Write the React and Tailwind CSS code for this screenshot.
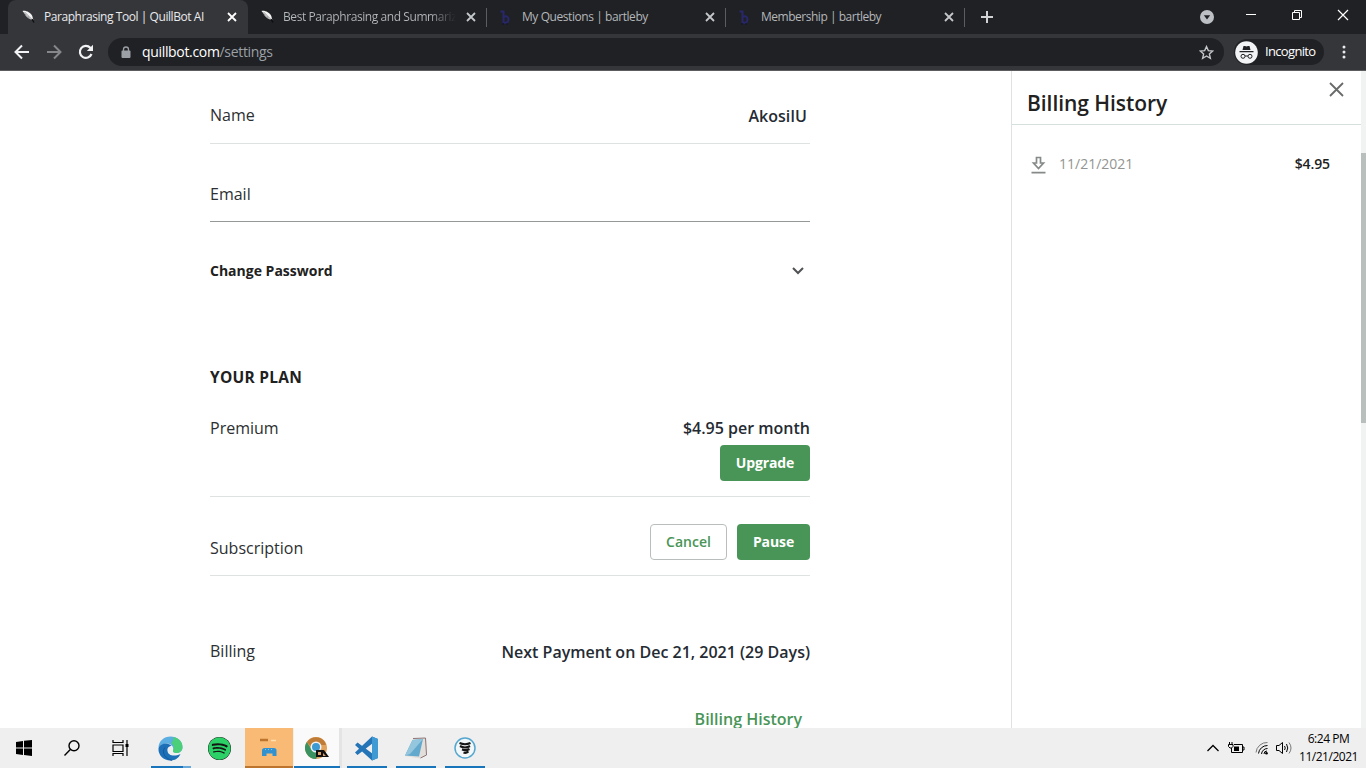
import { FaSpotify } from 'react-icons/fa';

const tabs = [
    { title: 'Paraphrasing Tool | QuillBot AI', icon: 'quill', active: true, text: 'tracking-[-0.44px]' },
    { title: 'Best Paraphrasing and Summariz', icon: 'quill', text: 'tracking-[-0.42px] bg-linear-to-r from-[#b4b7bb] from-85% to-[#202124] bg-clip-text text-transparent' },
    { title: 'My Questions | bartleby', icon: 'bartleby', text: 'tracking-[-0.43px]' },
    { title: 'Membership | bartleby', icon: 'bartleby', text: 'tracking-[-0.48px]' },
];

function QuillIcon() {
    return (
        <svg width="16" height="16" viewBox="0 0 16 16" className="shrink-0">
            <path d="M1.500 2C5 1.200 9.500 3.500 11.300 7L12.300 11 9.500 10.200C6.500 9 4.500 7 3.500 4.500Z" fill="#f4f4f4" />
            <path d="M3.500 3L11 10.500M5.500 7L4 5M8.500 9.500L6.500 7" stroke="#77797c" strokeWidth=".8" />
            <path d="M11 10.200L13 13.500" stroke="#0c0d0e" strokeWidth="1.300" />
        </svg>
    );
}

function BartlebyIcon() {
    return (
        <svg width="16" height="16" viewBox="0 0 16 16" fill="none" className="shrink-0">
            <path d="M1.500 2.500H4.500V14M4.500 8C6.500 6.500 9.500 7 9.500 10.500S6.500 14.500 4.500 13" stroke="#28276c" strokeWidth="2" />
            <path d="M3 15H9" stroke="#111238" strokeDasharray="2 2" />
        </svg>
    );
}

function Cross({ size = 8, stroke = 1.8 }) {
    return (
        <svg width={size} height={size} viewBox="0 0 10 10" stroke="currentColor" strokeWidth={(stroke * 10) / size} className="shrink-0 overflow-visible">
            <path d="M0 0L10 10M10 0L0 10" />
        </svg>
    );
}

function Tab({ tab }) {
    return (
        <div className={`relative flex h-[34px] shrink-0 items-center ${tab.active ? 'w-[240px] rounded-t-lg bg-[#35363a] pl-[13px] text-[#e8eaed]' : 'w-[239px] pl-[12px] text-[#b4b7bb]'}`}>
            {tab.icon === 'quill' ? <QuillIcon /> : <BartlebyIcon />}
            <span className={`ml-[7px] whitespace-nowrap text-[12px] ${tab.text}`}>{tab.title}</span>
            <div className={`ml-auto mr-[12px] ${tab.active ? 'text-white' : 'text-[#c4c7ca]'}`}>
                <Cross />
            </div>
            {!tab.active && <div className="absolute right-0 top-2 h-[19px] w-px bg-[#5b5d60]" />}
        </div>
    );
}

function TabStrip() {
    return (
        <div className="flex h-[34px] items-center bg-[#202124]">
            <div className="ml-2 flex">
                {tabs.map(tab => <Tab key={tab.title} tab={tab} />)}
            </div>
            <svg width="12" height="12" viewBox="0 0 12 12" stroke="#d0d2d4" strokeWidth="2" className="ml-[16px]">
                <path d="M6 0V12M0 6H12" />
            </svg>
            <div className="ml-auto flex items-center">
                <svg width="14" height="14" viewBox="0 0 14 14">
                    <circle cx="7" cy="7" r="7" fill="#bdc1c6" />
                    <path d="M3.800 5.300H10.200L7 9.500Z" fill="#202124" />
                </svg>
                <div className="ml-[32px] mb-[5px] h-px w-[10px] bg-white" />
                <svg width="10" height="10" viewBox="0 0 10 10" fill="none" stroke="white" className="ml-[36px] mb-[5px]">
                    <path d="M.5 2.500H7.500V9.500H.5ZM2.500 2V.5H9.500V7.500H8" />
                </svg>
                <div className="ml-[36px] mr-[18px] mb-[5px] text-white">
                    <Cross size={10} stroke={1.2} />
                </div>
            </div>
        </div>
    );
}

function Toolbar() {
    return (
        <div className="flex h-[37px] items-center border-b border-[#5c5b5f] bg-[#35363a]">
            <svg width="16" height="16" viewBox="0 0 16 16" fill="none" stroke="#f1f3f4" strokeWidth="2" className="ml-[14px]">
                <path d="M15 8H2M8 1.500L1.500 8 8 14.500" />
            </svg>
            <svg width="16" height="16" viewBox="0 0 16 16" fill="none" stroke="#85878a" strokeWidth="2" className="ml-4">
                <path d="M1 8H14M8 1.500L14.500 8 8 14.500" />
            </svg>
            <svg width="16" height="16" viewBox="0 0 16 16" fill="none" stroke="#f1f3f4" strokeWidth="2.200" className="ml-4">
                <path d="M13.500 10A6 6 0 1 1 12.300 3.800L14 5.500" />
                <path d="M15 .8V7H8.800Z" fill="#f1f3f4" stroke="none" />
            </svg>
            <div className="ml-[14px] flex h-7 w-[1116px] items-center rounded-full bg-[#202124] pl-[13px] pr-[10px]">
                <svg width="10" height="13" viewBox="0 0 10 13" fill="none">
                    <path d="M2.500 5V3.500A2.500 2.500 0 0 1 7.500 3.500V5" stroke="#9aa0a6" strokeWidth="1.300" />
                    <rect x=".5" y="4.500" width="9" height="7.500" rx="1" fill="#9aa0a6" />
                </svg>
                <span className="mb-px ml-[11px] text-[14px] tracking-[-0.33px] text-white">
                    quillbot.com<span className="text-[#9aa0a6]">/settings</span>
                </span>
                <svg width="15" height="15" viewBox="0 0 24 24" fill="none" stroke="#c5c8cb" strokeWidth="2.200" className="ml-auto">
                    <path d="M12 2.500L14.900 9 22 9.600 16.600 14.300 18.200 21.300 12 17.600 5.800 21.300 7.400 14.300 2 9.600 9.100 9Z" />
                </svg>
            </div>
            <div className="ml-[10px] flex h-[26px] w-[90px] items-center rounded-full bg-[#202124]">
                <svg width="23" height="23" viewBox="0 0 23 23" fill="none" className="ml-px shrink-0">
                    <circle cx="11.500" cy="11.500" r="11.300" fill="#f1f3f4" />
                    <path d="M7.500 9L8.500 5H10L11.500 5.500 13 5H14.500L15.500 9Z" fill="#202124" />
                    <path d="M4.500 10.700H18.500M10 15H13" stroke="#202124" strokeWidth="1.200" />
                    <circle cx="8" cy="15.300" r="2" stroke="#202124" />
                    <circle cx="15" cy="15.300" r="2" stroke="#202124" />
                </svg>
                <span className="ml-[7px] text-[13px] tracking-[-0.66px] text-white">Incognito</span>
            </div>
            <svg width="4" height="14" viewBox="0 0 4 14" fill="#e8eaed" className="ml-[18px]">
                <circle cx="2" cy="2" r="1.500" />
                <circle cx="2" cy="7" r="1.500" />
                <circle cx="2" cy="12" r="1.500" />
            </svg>
        </div>
    );
}

function Settings() {
    return (
        <main className="ml-[210px] w-[600px] text-[16px] leading-6 text-[#2d2f31]">
            <div className="flex h-[73px] items-center justify-between border-b border-[#dee3e2] pt-4">
                <span>Name</span>
                <span className="pr-[3px] pt-0.5 font-semibold text-[#252b33]">AkosiIU</span>
            </div>
            <div className="flex h-[78px] items-center border-b border-[#949996] pt-[23px]">Email</div>
            <div className="flex h-[98px] items-center justify-between pr-[6px]">
                <span className="text-[14px] font-bold text-[#212121]">Change Password</span>
                <svg width="12" height="8" viewBox="0 0 12 8" fill="none" stroke="#505254" strokeWidth="2">
                    <path d="M1 1L6 6 11 1" />
                </svg>
            </div>
            <h2 className="flex h-[84px] items-center pt-[30px] text-[15.5px] font-bold tracking-[0.25px] text-[#212121]">YOUR PLAN</h2>
            <div className="flex h-[93px] items-start justify-between border-b border-[#dee3e2] pt-3">
                <span>Premium</span>
                <div className="flex flex-col items-end gap-[5px]">
                    <span className="font-semibold text-[#252b33]">$4.95 per month</span>
                    <button className="h-9 w-[90px] rounded-[4px] bg-[#499557] text-[14px] font-bold tracking-[-0.1px] text-white">Upgrade</button>
                </div>
            </div>
            <div className="flex h-[79px] items-start justify-between border-b border-[#dee3e2] pt-[27px]">
                <span className="pt-3">Subscription</span>
                <div className="flex gap-[10px]">
                    <button className="h-9 w-[77px] rounded-[4px] border border-[#b9bebb] text-[14px] font-semibold text-[#499557]">Cancel</button>
                    <button className="h-9 w-[73px] rounded-[4px] bg-[#499557] text-[14px] font-bold tracking-[-0.1px] text-white">Pause</button>
                </div>
            </div>
            <div className="flex h-[118px] items-center justify-between pt-8">
                <span>Billing</span>
                <span className="pt-0.5 font-semibold text-[#252b33]">Next Payment on Dec 21, 2021 (29 Days)</span>
            </div>
            <div className="flex h-[50px] items-center justify-end pr-2 font-semibold text-[#499557]">Billing History</div>
        </main>
    );
}

function BillingPanel() {
    return (
        <aside className="ml-auto w-[350px] border-l border-[#dde3e2]">
            <div className="flex h-[54px] justify-between border-b border-[#d5dfdd] pl-[15px] pr-[18px]">
                <h2 className="pt-[18px] text-[21px] font-semibold leading-7 tracking-[-0.05px] text-[#212121]">Billing History</h2>
                <div className="pt-[12px] text-[#686b6a]">
                    <Cross size={13} stroke={1.8} />
                </div>
            </div>
            <div className="flex h-[78px] items-center pl-[19px] pr-[31px] text-[14px]">
                <svg width="15" height="18" viewBox="0 0 15 18" fill="none" stroke="#858988" strokeWidth="1.700" className="mt-0.5">
                    <path d="M5.500 1.500H9.500V7H12.500L7.500 12.500 2.500 7H5.500ZM.5 16.700H14.500" />
                </svg>
                <span className="mb-0.5 ml-[13px] text-[#929591]">11/21/2021</span>
                <span className="mb-0.5 ml-auto font-semibold tracking-[-0.1px] text-[#212121]">$4.95</span>
            </div>
        </aside>
    );
}

function EdgeIcon() {
    return (
        <svg width="25" height="25" viewBox="0 0 25 25" className="mr-px">
            <path d="M.5 12C.5 5 6 .5 12.500 .5C19 .5 24.500 5 24.500 11C24.500 15 21.500 17 18.500 17C16 17 14.500 16 15 14.500C16.500 11 13 7.500 8.500 7.500C4 7.500 1 10 .5 12Z" fill="#5baee2" />
            <path d="M15 1C21 2 24.500 6 24.500 11C24.500 15 21.500 17 18.500 17C16 17 14.500 16 15 14.500C17 11 15 8 13 7C15 6 16 3 15 1Z" fill="#4bcf78" />
            <path d="M.5 12.500C1 9.500 4.500 7 8.500 7.500C11 8 13 9 13.500 10C10.500 10 9 12.500 9.500 15C10 19.500 16 21 22.500 18C20.500 22.500 16.500 24.500 12.500 24.500C5.500 24.500 0 19 .5 12.500Z" fill="#1c70b8" />
            <path d="M7 11.500C3 16 7 23 14 24.300" fill="none" stroke="#18599b" />
        </svg>
    );
}

function ExplorerIcon() {
    return (
        <svg width="22" height="22" viewBox="0 0 22 22">
            <path d="M2 3H10" stroke="#bd752e" strokeWidth="2.500" />
            <path d="M13 3.500H18" stroke="#ffe0ae" strokeWidth="1.500" />
            <path d="M4 19V13.500Q4 11 6.500 11H16Q18.500 11 18.500 13.500V19H14.500V16.500H8.500V19Z" fill="#3192cf" />
            <path d="M7 12.500H16" stroke="#85c5de" strokeDasharray="1 2" />
        </svg>
    );
}

function ChromeIcon() {
    return (
        <svg width="24" height="24" viewBox="0 0 24 24">
            <circle cx="11" cy="12" r="11" fill="#e2a35c" />
            <path d="M2 6A11 11 0 0 1 20 6L21 9H11L7 12Z" fill="#bf7c37" />
            <path d="M1.800 6A11 11 0 0 0 11 23L14 17 7 14Z" fill="#3a9261" />
            <circle cx="11" cy="11" r="5.500" fill="#f3f3f3" />
            <circle cx="11" cy="11" r="4" fill="#3d9ad3" />
            <path d="M11 14H19L24 21H11Z" fill="#111" />
            <path d="M13 16H16V19H13M18 17L21 20H18Z" fill="#d9a36b" />
        </svg>
    );
}

function VsCodeIcon() {
    return (
        <svg width="25" height="25" viewBox="0 0 25 25" className="mr-px">
            <path d="M18 .5L24 3V22L18 24.500L1 9 3.500 6.500 19 18V7L3.500 19 1 16.500Z" fill="#2474b8" />
            <path d="M18 .5L24 3V22L18 24.500Z" fill="#3f9ad3" />
        </svg>
    );
}

function NotebookIcon() {
    return (
        <svg width="24" height="24" viewBox="0 0 24 24">
            <path d="M9 3L22 2 23 19 16 22.500 1 20Z" fill="#e2dfdb" />
            <path d="M8.500 4L19 3 15 20.500 1 19.500Z" fill="#63a9ce" />
            <path d="M8.500 4L19 3 6 18 1 19.500Z" fill="#94c7de" />
            <path d="M9 2.500L21.500 2 22.500 19 16.500 22" fill="none" stroke="#8d7476" />
        </svg>
    );
}

function TornadoIcon() {
    return (
        <svg width="22" height="22" viewBox="0 0 22 22" fill="none" className="mr-px">
            <circle cx="11" cy="11" r="10" fill="#f2f8fa" stroke="#55a7d0" strokeWidth="1.500" />
            <path d="M5.500 6Q11 8.500 16.500 6M6 9Q11 12 16 9M8 12.500Q12 14 15.500 12M9.500 15.500Q12 16.500 14.500 14.500" stroke="#151515" strokeWidth="2.100" />
        </svg>
    );
}

const apps = [
    { name: 'edge', icon: <EdgeIcon />, bar: 'w-10 bg-linear-to-r from-[#1874bb] from-80% to-[#69a9d9] to-80%' },
    { name: 'spotify', icon: <FaSpotify size={23} color="#2bd066" className="mr-px rounded-full bg-[#151515]" /> },
    { name: 'explorer', icon: <ExplorerIcon />, bg: 'bg-[#f8ba75]', bar: 'w-12 bg-[#bd752e]' },
    { name: 'chrome', icon: <ChromeIcon />, bg: 'bg-[#fafafa] border-r-3 border-[#e4e4e4]', bar: 'left-0 w-[46px] bg-[#1874bb]' },
    { name: 'vscode', icon: <VsCodeIcon />, bar: 'w-10 bg-[#1874bb]' },
    { name: 'notebook', icon: <NotebookIcon />, bar: 'w-10 bg-[#1874bb]' },
    { name: 'tornado', icon: <TornadoIcon />, bar: 'w-10 bg-[#1874bb]' },
];

function Taskbar() {
    return (
        <footer className="flex h-10 items-center bg-[#efefef] text-black">
            <div className="flex w-12 justify-center">
                <svg width="16" height="16" viewBox="0 0 16 16">
                    <path d="M0 2L7 1V7.500H0ZM8 .8L16 0V7.500H8ZM0 8.500H7V15L0 14ZM8 8.500H16V16L8 15Z" />
                </svg>
            </div>
            <div className="flex w-12 justify-center">
                <svg width="16" height="16" viewBox="0 0 16 16" fill="none" stroke="black" strokeWidth="1.400">
                    <circle cx="10" cy="5.800" r="5" />
                    <path d="M6.300 9.500L.5 15.500" />
                </svg>
            </div>
            <div className="flex w-12 justify-center">
                <svg width="17" height="16" viewBox="0 0 17 16" fill="none" stroke="black" strokeWidth="1.200">
                    <path d="M1 0V2.500H11V0M1 5H11V11.500H1ZM1 16V13.500H11V16M15 0V16" />
                    <path d="M13.500 4H16.500V7H13.500Z" fill="black" stroke="none" />
                </svg>
            </div>
            <div className="ml-[3px] flex gap-px">
                {apps.map(app => (
                    <div key={app.name} className={`relative flex h-10 w-12 items-center justify-center ${app.bg || ''}`}>
                        {app.icon}
                        {app.bar && <div className={`absolute bottom-0 h-0.5 ${app.bar}`} />}
                    </div>
                ))}
            </div>
            <div className="ml-auto flex items-center">
                <svg width="12" height="8" viewBox="0 0 12 8" fill="none" stroke="black" strokeWidth="1.300">
                    <path d="M.5 7L6 1.500 11.500 7" />
                </svg>
                <svg width="17" height="12" viewBox="0 0 17 12" fill="none" stroke="black" className="ml-[9px]">
                    <path d="M6 2.500H14.500V10.500H3.500V6M15 5H16V8H15M1.500 0V2M4 0V2M.5 2.500H5V4.500L3.500 6H2L.5 4.500Z" />
                    <path d="M6 4.500H11V9H6Z" fill="black" stroke="none" />
                </svg>
                <svg width="14" height="14" viewBox="0 0 14 14" fill="none" stroke="black" className="ml-[10px]">
                    <path d="M1 11.500A11 11 0 0 1 12.500 1.500" stroke="#777" />
                    <path d="M3.500 12.500A9 9 0 0 1 12.500 4.500M6.500 13A6 6 0 0 1 12.500 7.500M9 13A3 3 0 0 1 12 10" />
                    <circle cx="11.500" cy="12.300" r="1.300" fill="black" stroke="none" />
                </svg>
                <svg width="17" height="14" viewBox="0 0 17 14" fill="none" stroke="black" className="ml-[7px]">
                    <path d="M.5 4.500H3L6.500 1.500V12.500L3 9.500H.5ZM8.500 5Q10 7 8.500 9M10.500 3Q13 7 10.500 11" />
                    <path d="M13 1.500Q17 7 13 12.500" stroke="#777" />
                </svg>
                <div className="ml-[6px] mr-[8px] w-[59px] whitespace-nowrap text-center text-[12px] leading-[18px] tracking-[-0.47px]">
                    <div>6:24 PM</div>
                    <div>11/21/2021</div>
                </div>
            </div>
        </footer>
    );
}

export default function App() {
    return (
        <div className="flex h-[768px] w-[1366px] flex-col overflow-hidden bg-white font-['Open_Sans','Noto_Sans',sans-serif]">
            <TabStrip />
            <Toolbar />
            <div className="flex h-[657px] overflow-hidden">
                <Settings />
                <BillingPanel />
                <div className="w-[5px] bg-[#f1f2f2] pt-[82px]">
                    <div className="h-[270px] bg-[#b9bfbd]" />
                </div>
            </div>
            <Taskbar />
        </div>
    );
}
